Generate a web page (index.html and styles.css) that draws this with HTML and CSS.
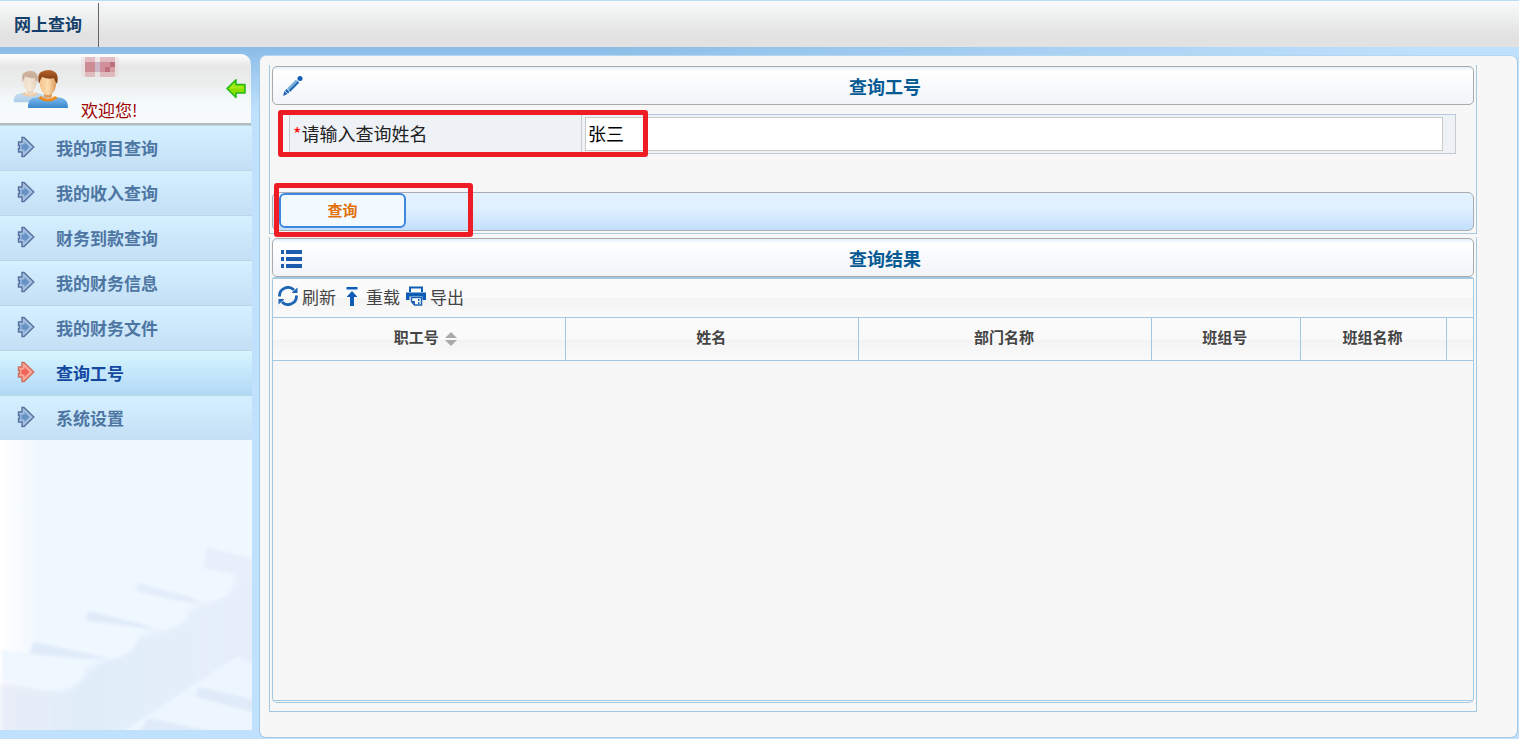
FILE: index.html
```html
<!DOCTYPE html>
<html lang="zh-CN">
<head>
<meta charset="utf-8">
<title>网上查询</title>
<link rel="stylesheet" href="styles.css">
</head>
<body>
<svg class="defs" aria-hidden="true">
  <defs>
    <symbol id="arrow" viewBox="0 0 18 22">
      <path d="M1.500 6H5V1.500H7L16.800 11L7 20.500H5V16H1.500V12.500H2.500V9.500H1.500Z" stroke-width="1.400"/>
      <path d="M4.500 8.500H7.500V6L12.500 11L7.500 16V13.500H4.500Z" stroke="none" class="core"/>
    </symbol>
    <linearGradient id="skin" x2="1"><stop offset="0" stop-color="#f6c48c"/><stop offset=".5" stop-color="#fddcae"/><stop offset="1" stop-color="#d99a5c"/></linearGradient>
    <linearGradient id="shirt" x2="0" y2="1"><stop offset="0" stop-color="#7fbcf0"/><stop offset="1" stop-color="#3b86cc"/></linearGradient>
    <linearGradient id="hair" x2="0" y2="1"><stop offset="0" stop-color="#b5642a"/><stop offset="1" stop-color="#6e2f0a"/></linearGradient>
    <symbol id="person" viewBox="0 0 42 40" preserveAspectRatio="none">
      <path d="M1 39C1 30 4 29 13 28Q21 33 29 28C38 29 41 31 41 39Z" fill="url(#shirt)"/>
      <path d="M14 27Q21 33 28 27L31 29Q21 36 11 29Z" fill="#f08a1c"/>
      <path d="M17 22H25V28Q21 31 17 28Z" fill="#dca066"/>
      <path d="M13 9Q21 2 29 9V17Q27 26 21 26Q15 26 13 17Z" fill="url(#skin)"/>
      <path d="M12 15Q10 5 14 3Q22-1 28 3Q32 6 30 15Q28 12 27 9Q22 11 15 8Q13 11 12 15Z" fill="url(#hair)"/>
    </symbol>
  </defs>
</svg>

<header class="topbar">
  <a class="topbar-tab" href="#">网上查询</a>
</header>

<div class="layout">
  <aside class="sidebar">
    <section class="user">
      <svg class="avatar" viewBox="0 0 56 40" aria-hidden="true">
        <use href="#person" x="0" y="1" width="34" height="33" opacity=".38"/>
        <use href="#person" x="14" y="0" width="42" height="40"/>
      </svg>
      <div class="user-text">
        <svg class="user-name" viewBox="0 0 38 20" aria-hidden="true">
          <path fill="#e8d8da" d="M0 0H38V20H0Z" opacity=".5"/>
          <path fill="#d9a2aa" d="M4 0H14V5H4ZM4 15H14V20H4ZM19 0H34V5H19ZM19 15H34V20H19Z" opacity=".6"/>
          <path fill="#cd8c93" d="M4 5H14V15H4Z"/>
          <path fill="#cdb6c8" d="M14 5H19V15H14Z"/>
          <path fill="#cf8f9d" d="M19 5H29V10H24V15H19Z"/>
          <path fill="#bf6f7b" d="M29 5H34V10H29ZM24 10H29V15H24Z"/>
          <path fill="#d3a0a6" d="M29 10H34V15H29Z"/>
        </svg>
        <p class="welcome">欢迎您!</p>
      </div>
      <button class="collapse" type="button" aria-label="收起">
        <svg viewBox="0 0 20 20" aria-hidden="true"><path d="M1 9.500L10 .8V5.500H19V14H10V18.500Z" fill="#8be000" stroke="#22b81a" stroke-width="1.500" stroke-linejoin="round"/><path d="M3.500 9.500L8.500 4.500V7.500H17V9.500Z" fill="#a9ec20"/></svg>
      </button>
    </section>
    <nav class="menu">
      <a class="menu-item" href="#"><svg class="menu-icon"><use href="#arrow"/></svg>我的项目查询</a>
      <a class="menu-item" href="#"><svg class="menu-icon"><use href="#arrow"/></svg>我的收入查询</a>
      <a class="menu-item" href="#"><svg class="menu-icon"><use href="#arrow"/></svg>财务到款查询</a>
      <a class="menu-item" href="#"><svg class="menu-icon"><use href="#arrow"/></svg>我的财务信息</a>
      <a class="menu-item" href="#"><svg class="menu-icon"><use href="#arrow"/></svg>我的财务文件</a>
      <a class="menu-item active" href="#"><svg class="menu-icon"><use href="#arrow"/></svg>查询工号</a>
      <a class="menu-item" href="#"><svg class="menu-icon"><use href="#arrow"/></svg>系统设置</a>
    </nav>
    <div class="scenery">
      <svg viewBox="0 0 252 200" aria-hidden="true">
        <defs>
          <filter id="soft"><feGaussianBlur stdDeviation="1.500"/></filter>
          <filter id="softer"><feGaussianBlur stdDeviation="3"/></filter>
          <linearGradient id="side" x2="1"><stop offset="0" stop-color="#e9edf8"/><stop offset=".3" stop-color="#e0edf9"/><stop offset="1" stop-color="#e7effb"/></linearGradient>
        </defs>
        <path filter="url(#softer)" fill="url(#side)" d="M0 152L55 161Q80 160 86 140L110 127Q130 126 140 106L165 100Q186 96 190 80L215 70Q240 62 235 45L270 40V210H0Z"/>
        <g filter="url(#soft)">
          <path fill="#eff7ff" d="M140 61L200 71Q228 72 232 54L205 38ZM90 92L150 99Q180 100 188 82L140 62ZM36 124L100 129Q130 130 138 108L88 92ZM2 150L45 160Q78 162 85 140L30 124L2 120Z"/>
          <path fill="#e8effb" d="M207 17L256 30V48L203 38Z"/>
          <path fill="#e3ecf9" d="M138 53L190 67L205 74L180 71L136 61Z"/>
          <path fill="#dfebf8" d="M88 81L145 95L155 100L130 96L86 91Z"/>
          <path fill="#dfebf8" d="M33 112L90 124L110 129L85 129L30 124Z"/>
          <path fill="#edf6ff" d="M122 202L238 126L260 140V202Z"/>
          <path fill="#dfebf8" d="M198 157L256 170V183L196 167ZM148 188L214 202H140Z"/>
        </g>
      </svg>
    </div>
  </aside>

  <main class="main">
    <form class="group query" action="#" onsubmit="return false">
      <div class="titlebar">
        <svg class="title-icon" viewBox="0 0 22 22" aria-hidden="true">
          <path d="M2 21L3.500 16L6.500 19Z" fill="#1c64b4"/>
          <path d="M4 15.500L7 18.500L8.500 17L5.500 14Z" fill="#0f5db5"/>
          <path d="M6 13.500L15 4.500L18 7.500L9 16.500Z" fill="#7faedb"/>
          <path d="M8.500 16L17.500 7" stroke="#1f68b8" stroke-width="2"/>
          <circle cx="19" cy="3.500" r="2.500" fill="#0f5db5"/>
        </svg>
        <h1 class="title">查询工号</h1>
      </div>
      <div class="field-row">
        <label class="field-label" for="staff-name"><span class="required">*</span>请输入查询姓名</label>
        <input class="field-input" id="staff-name" type="text" value="张三">
        <span class="mark mark-field"></span>
      </div>
      <div class="actions">
        <button class="submit" type="submit">查询</button>
        <span class="mark mark-action"></span>
      </div>
    </form>

    <section class="group results">
      <div class="titlebar">
        <svg class="title-icon" viewBox="0 0 22 22" aria-hidden="true">
          <path fill="#1c5cae" d="M0 3H3V7H0ZM5 3H21V7H5ZM0 10H3V14H0ZM5 10H21V14H5ZM0 17H3V21H0ZM5 17H21V21H5Z"/>
        </svg>
        <h2 class="title">查询结果</h2>
      </div>
      <div class="grid">
        <div class="toolbar">
          <button class="tool" type="button">
            <svg viewBox="0 0 20 20" aria-hidden="true"><g fill="none" stroke="#1c64b4" stroke-width="2.800"><path d="M1.500 10.500A8.500 8.500 0 0 1 16 4"/><path d="M18.500 9.500A8.500 8.500 0 0 1 4 16"/></g><path fill="#1c64b4" d="M13.500 7L19.500 7V1.500ZM6.500 13H.5V18.500Z"/></svg>刷新</button>
          <button class="tool" type="button">
            <svg viewBox="0 0 20 20" aria-hidden="true"><path fill="#0d5cb6" d="M4.500 1H15.500V3.500H4.500ZM10 5L15.500 11H12V20H8V11H4.500Z"/></svg>重载</button>
          <button class="tool" type="button">
            <svg viewBox="0 0 20 20" aria-hidden="true"><path fill="none" stroke="#0d5cb6" stroke-width="2" d="M4 6V1.500H16V6"/><path fill="#0d5cb6" d="M0 6.500H20V14H16.500V10.500H3.500V14H0Z"/><path fill="#fff" stroke="#1c64b4" stroke-width="1.500" d="M5.500 11.500H15.500V19H8.500L5.500 15.500Z"/><path fill="#1c64b4" d="M5 15H9V19ZM12 13H13.500V15H12ZM12 16H13.500V18H12Z"/></svg>导出</button>
        </div>
        <table class="table">
          <colgroup><col class="wide"><col class="wide"><col class="wide"><col class="medium"><col class="narrow"><col></colgroup>
          <thead>
            <tr>
              <th scope="col">职工号<svg class="sort" viewBox="0 0 12 16" aria-hidden="true"><path fill="#aaa" d="M6 1L12 7H0ZM0 9H12L6 15Z"/></svg></th>
              <th scope="col">姓名</th>
              <th scope="col">部门名称</th>
              <th scope="col">班组号</th>
              <th scope="col">班组名称</th>
              <td></td>
            </tr>
          </thead>
        </table>
        <div class="grid-foot"></div>
      </div>
    </section>
  </main>
</div>
</body>
</html>
```

FILE: styles.css
```css
* {
  box-sizing: border-box;
}

body {
  margin: 0;
  min-height: 100vh;
  display: flex;
  flex-direction: column;
  font-family: "Noto Sans CJK SC", "Liberation Sans", sans-serif;
  font-size: 17px;
  background: #c0e1fd;
}

button,
input {
  font: inherit;
}

a {
  text-decoration: none;
}

.defs {
  position: absolute;
  width: 0;
  height: 0;
}

/* top bar */
.topbar {
  display: flex;
  height: 47px;
  padding-top: 2px;
  border-top: 1px solid #b9dcf6;
  background: linear-gradient(#f8fafb, #e2e2e2 75%, #e2e2e2);
}

.topbar-tab {
  padding: 0 16px 0 14px;
  border-right: 1px solid #666;
  font-weight: bold;
  line-height: 42px;
  color: #143f6b;
}

.layout {
  flex: 1;
  display: flex;
  gap: 7px;
  padding-right: 1px;
  background: linear-gradient(to right, transparent 40%, #c0e1fd 95%), linear-gradient(#8abce7, #c0e1fd 64px);
}

/* sidebar */
.sidebar {
  flex: 0 0 252px;
  display: flex;
  flex-direction: column;
  padding: 7px 0 9px;
}

.user {
  display: flex;
  align-items: center;
  height: 71px;
  margin-right: 1px;
  padding: 0 5px 0 13px;
  border-bottom: 2px solid #b4bcc0;
  border-radius: 0 10px 0 0;
  background: linear-gradient(#fff, #e7e7e7 12px, #eceeee 30px, #f5fbfb 50px, #f8fafa);
}

.avatar {
  width: 56px;
  height: 40px;
}

.user-text {
  flex: 1;
  padding: 4px 0 0 12px;
}

.user-name {
  display: block;
  width: 38px;
  height: 20px;
}

.welcome {
  margin: 18px 0 0;
  line-height: 30px;
  color: #a00000;
}

.collapse {
  width: 20px;
  height: 20px;
  padding: 0;
  border: 0;
  background: none;
}

.collapse svg {
  display: block;
}

.menu-item {
  --core: #6892c6;
  display: flex;
  align-items: center;
  gap: 21px;
  height: 45px;
  padding: 0 0 2px 17px;
  border-top: 1px solid #b9d6e4;
  font-weight: bold;
  color: #4e76a3;
  background: linear-gradient(#d5f0ff, #c4dff5);
}

.menu-icon {
  width: 18px;
  height: 22px;
  fill: #a3c0e0;
  stroke: #56719f;
}

.core {
  fill: var(--core);
}

.menu-item.active {
  --core: #f0645a;
  color: #1248a0;
  background: linear-gradient(#d6f6ff, #b2d8f5);
}

.active .menu-icon {
  fill: #fba696;
  stroke: #cf6d5c;
}

.scenery {
  flex: 1;
  display: flex;
  align-items: flex-end;
  overflow: hidden;
  background: linear-gradient(to right, #fff, #eff7ff 40px);
}

.scenery svg {
  display: block;
  width: 100%;
}

/* main panel */
.main {
  flex: 1;
  min-width: 0;
  display: flex;
  flex-direction: column;
  gap: 3px;
  margin: 8px 0 1px;
  padding: 9px 40px 25px 9px;
  border: 1px solid #a3cae4;
  border-top-color: #b4d6ee;
  border-radius: 7px;
  background: #f7f7f7;
}

.group {
  padding: 1px 2px 2px;
  border: 1px solid #a3c8e1;
  border-top: 0;
}

.titlebar {
  display: flex;
  align-items: center;
  height: 39px;
  padding: 0 6px 0 8px;
  border: 1px solid #aaa;
  border-radius: 5px;
  background: linear-gradient(#e4effc, #fff 4px, #f1f4fa);
}

.title-icon {
  width: 22px;
  height: 22px;
}

.title {
  flex: 1;
  margin: 0;
  font-size: 18px;
  line-height: 26px;
  text-align: center;
  color: #065a94;
}

.field-row {
  position: relative;
  display: flex;
  height: 40px;
  margin: 9px 18px 38px 17px;
  padding-right: 12px;
  border: 1px solid #c6cbd0;
  border-top-color: #b7c9df;
  font-size: 18px;
  background: #eef2f6;
}

.field-label {
  flex: 0 0 292px;
  padding-left: 3px;
  border-right: 1px solid #c6cbd0;
  line-height: 36px;
  color: #222;
}

.required {
  color: #f00;
}

.field-input {
  flex: 1;
  min-width: 0;
  margin: 2px 0 2px 3px;
  padding: 0 2px 2px;
  border: 1px solid #c8c8c8;
  background: #fff;
  color: #000;
}

.mark {
  position: absolute;
  border: 5px solid #ee1c25;
  border-radius: 3px;
  pointer-events: none;
}

.mark-field {
  top: -5px;
  left: -12px;
  width: 370px;
  height: 47px;
}

.actions {
  position: relative;
  display: flex;
  height: 39px;
  padding: 0 6px;
  border: 1px solid #a9acb0;
  border-radius: 6px;
  background: linear-gradient(#e4f2ff, #def0ff 45%, #c2dffb);
}

.submit {
  width: 127px;
  height: 35px;
  padding: 0 0 2px;
  border: 2px solid #3e86e0;
  border-radius: 6px;
  font-size: 15px;
  font-weight: bold;
  color: #e17009;
  background: #f3faff;
}

.mark-action {
  top: -10px;
  left: 1px;
  width: 199px;
  height: 54px;
}

/* results */
.results {
  flex: 1;
  display: flex;
  flex-direction: column;
  padding-bottom: 8px;
}

.grid {
  flex: 1;
  display: flex;
  flex-direction: column;
  border: 1px solid #a3c8e1;
  border-top-width: 2px;
  border-radius: 3px 3px 5px 5px;
}

.toolbar {
  display: flex;
  gap: 6px;
  height: 38px;
  padding: 0 5px 4px;
  background: linear-gradient(#fbfbfb 48%, #f4f4f4 52%, #fafafa);
}

.tool {
  display: flex;
  align-items: center;
  gap: 4px;
  padding: 0;
  border: 0;
  background: none;
  color: #444;
}

.tool svg {
  width: 20px;
  height: 20px;
}

.table {
  width: 100%;
  table-layout: fixed;
  border-collapse: collapse;
}

.table tr {
  background: linear-gradient(#fafafa 48%, #f4f4f4 52%, #fafafa);
}

.wide {
  width: 24.4%;
}

.medium {
  width: 12.4%;
}

.narrow {
  width: 12.2%;
}

.table th,
.table td {
  height: 43px;
  padding: 0 2px 4px 0;
  border: 1px solid #a3c8e1;
  font-size: 15px;
  font-weight: bold;
  line-height: 22px;
  color: #444;
}

.table th:first-child {
  border-left: 0;
}

.table td {
  border-right: 0;
}

.sort {
  width: 12px;
  height: 16px;
  margin: 0 -14px 0 6px;
  vertical-align: middle;
}

.grid-foot {
  height: 2px;
  margin-top: auto;
  border-top: 1px solid #a3c8e1;
}
```
